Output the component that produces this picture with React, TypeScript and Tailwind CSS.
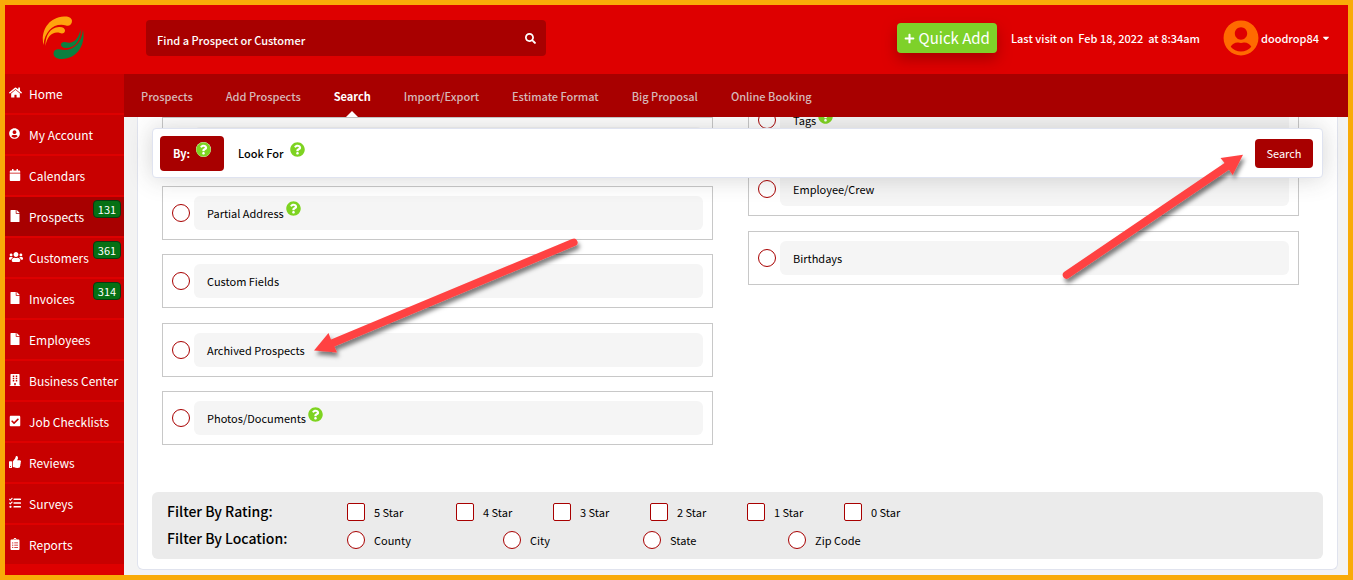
import type { ReactNode } from "react";
import {
  FaBuilding,
  FaCalendar,
  FaCaretDown,
  FaCheckSquare,
  FaClipboardList,
  FaFile,
  FaHome,
  FaPlus,
  FaQuestionCircle,
  FaSearch,
  FaTasks,
  FaThumbsUp,
  FaUserCircle,
  FaUsers,
} from "react-icons/fa";

type MenuItem = { label: string; icon: ReactNode; badge?: string; active?: boolean };

const menu: MenuItem[] = [
  { label: "Home", icon: <FaHome size={13} /> },
  { label: "My Account", icon: <FaUserCircle size={11} /> },
  { label: "Calendars", icon: <FaCalendar size={12} /> },
  { label: "Prospects", icon: <FaFile size={12} />, badge: "131", active: true },
  { label: "Customers", icon: <FaUsers size={14} />, badge: "361" },
  { label: "Invoices", icon: <FaFile size={12} />, badge: "314" },
  { label: "Employees", icon: <FaFile size={12} /> },
  { label: "Business Center", icon: <FaBuilding size={12} /> },
  { label: "Job Checklists", icon: <FaCheckSquare size={12} /> },
  { label: "Reviews", icon: <FaThumbsUp size={12} /> },
  { label: "Surveys", icon: <FaTasks size={12} /> },
  { label: "Reports", icon: <FaClipboardList size={12} /> },
];

const tabs = [
  "Prospects",
  "Add Prospects",
  "Search",
  "Import/Export",
  "Estimate Format",
  "Big Proposal",
  "Online Booking",
];

type OptionItem = { id: string; label?: string; help?: boolean };

const leftOptions: OptionItem[] = [
  { id: "address" },
  { id: "partial-address", label: "Partial Address", help: true },
  { id: "custom-fields", label: "Custom Fields" },
  { id: "archived", label: "Archived Prospects" },
  { id: "photos", label: "Photos/Documents", help: true },
];

const rightOptions: OptionItem[] = [
  { id: "tags", label: "Tags", help: true },
  { id: "employee", label: "Employee/Crew" },
  { id: "birthdays", label: "Birthdays" },
];

const ratings = ["5 Star", "4 Star", "3 Star", "2 Star", "1 Star", "0 Star"];

const locations = [
  { label: "County", width: "w-[156px]" },
  { label: "City", width: "w-[140px]" },
  { label: "State", width: "w-[145px]" },
  { label: "Zip Code", width: "w-[120px]" },
];

function Logo() {
  return (
    <svg width="42" height="44" viewBox="0 0 42 44" role="img" aria-label="Company logo">
      <path
        fill="#ffa40d"
        d="M1.500 29C-1.500 17 5 1.500 22 .5C27 .2 30 2 30 5C30 8.500 27 10.500 24 9.500C13 6.500 3 14 1.500 29Z"
      />
      <path
        fill="#ffa40d"
        d="M3.500 30C3 20 8 11.500 17 11C21 10.800 23 12.500 23 14.500C23 17 20.500 18 18 17C11 15 5 20 3.500 30Z"
      />
      <path
        fill="#0b8040"
        d="M41 14C43.500 27 37 42 20 43C15 43.200 11.500 41 11.500 37.500C11.500 34 15 32.500 18 33.500C29 36 39.500 29 41 14Z"
      />
      <path
        fill="#0b8040"
        d="M38.500 13C39.500 23 34 31.500 25 32C21 32.300 19 31 19 28.800C19 26.500 21.500 25.500 24 26.300C31 28.500 37 23 38.500 13Z"
      />
    </svg>
  );
}

function Help() {
  return (
    <button type="button" aria-label="Help" className="mb-2 shrink-0 text-[#7ed321]">
      <span className="block rounded-full bg-white">
        <FaQuestionCircle size={15} />
      </span>
    </button>
  );
}

const ring = "shrink-0 appearance-none border border-[#a80000] bg-white checked:bg-[#a80000]";

function Option({ id, label, help }: OptionItem) {
  return (
    <div className="flex h-[54px] items-center gap-1 border border-[#c8c8c8] px-[9px]">
      <input
        type="radio"
        name="search-by"
        id={id}
        aria-label={label ? undefined : id}
        className={`${ring} size-[18px] rounded-full`}
      />
      <div className="flex h-[34px] flex-1 items-center gap-0.5 rounded-md bg-[#f5f5f5] pl-[13px]">
        {label && <label htmlFor={id}>{label}</label>}
        {help && <Help />}
      </div>
    </div>
  );
}

function Arrows() {
  return (
    <svg
      className="pointer-events-none absolute top-[135px] left-[295px] z-20"
      width="960"
      height="230"
      viewBox="300 140 960 230"
      aria-hidden="true"
    >
      <defs>
        <filter id="arrow-shadow" x="-10%" y="-10%" width="120%" height="130%">
          <feDropShadow dx="2" dy="4" stdDeviation="2" floodColor="#000" floodOpacity="0.5" />
        </filter>
      </defs>
      <g fill="#ff4343" filter="url(#arrow-shadow)">
        <path d="M314 350.500L328.500 333L331 339.500L572 239A3.700 3.700 0 0 1 575.500 245.800L334.500 346.500L337 352.500Z" />
        <path d="M1243 154.700L1220.500 158L1224.500 163L1064 272A3.900 3.900 0 0 0 1068.500 278.300L1229 169.800L1232.700 175Z" />
      </g>
    </svg>
  );
}

export default function App() {
  return (
    <div className="relative flex min-h-screen flex-col border-5 border-[#f9ab08] bg-[#f3f3f3] font-['Noto_Sans_CJK_SC','Source_Sans_Pro',sans-serif] text-[11px] leading-4 text-black">
      <header className="flex h-[69px] items-center bg-[#de0000] pb-[3px] text-white">
        <a
          href="#home"
          className="flex w-[119px] shrink-0 justify-center pr-1"
          aria-label="Dashboard"
        >
          <Logo />
        </a>
        <form className="ml-[22px] flex h-9 w-[400px] items-center rounded bg-[#a80000] pr-[10px] pl-[11px]">
          <input
            type="text"
            aria-label="Find a Prospect or Customer"
            placeholder="Find a Prospect or Customer"
            className="min-w-0 flex-1 bg-transparent pt-1 font-medium outline-none placeholder:text-white"
          />
          <button type="button" aria-label="Find">
            <FaSearch size={11} />
          </button>
        </form>
        <button
          type="button"
          className="ml-auto flex h-[30px] items-center gap-1 rounded bg-[#7ed12a] px-[7px] text-[15px] shadow-[0_6px_14px_rgba(120,0,0,0.55)]"
        >
          <FaPlus size={11} />
          Quick Add
        </button>
        <p className="ml-[14px] font-medium whitespace-pre">Last visit on  Feb 18, 2022  at 8:34am</p>
        <button
          type="button"
          className="mr-[17px] ml-[23px] flex items-center gap-0.5 font-medium"
        >
          <FaUserCircle size={36} className="text-[#ff6a00]" />
          doodrop84
          <FaCaretDown size={10} />
        </button>
      </header>

      <div className="flex flex-1">
        <nav aria-label="Main menu" className="w-[119px] shrink-0 bg-[#de0000] text-white">
          <ul>
            {menu.map((item) => (
              <li
                key={item.label}
                className={`relative h-[41px] border-b-2 border-[#de0000] ${
                  item.active ? "bg-[#a80000]" : "bg-[#c80000]"
                }`}
              >
                <a href="#menu" className="flex h-full items-center pl-1 text-xs">
                  <span className="w-5 shrink-0 pb-0.5">{item.icon}</span>
                  <span className="whitespace-nowrap">{item.label}</span>
                </a>
                {item.badge && (
                  <span className="absolute top-[3px] right-[3px] flex h-[18px] w-7 items-center justify-center rounded-sm border border-[#0c3a10] bg-[#067014]">
                    {item.badge}
                  </span>
                )}
              </li>
            ))}
          </ul>
        </nav>

        <div className="flex min-w-0 flex-1 flex-col">
          <nav aria-label="Prospects" className="h-[43px] bg-[#a80000] pl-[17px] text-[#d6b8b8]">
            <ul className="flex h-full gap-[33px] font-medium">
              {tabs.map((tab) => (
                <li key={tab} className="relative flex items-center">
                  {tab === "Search" ? (
                    <>
                      <a href="#tab" aria-current="page" className="font-bold text-white">
                        {tab}
                      </a>
                      <span className="absolute bottom-0 left-1/2 size-0 -translate-x-1/2 border-x-6 border-b-6 border-x-transparent border-b-white" />
                    </>
                  ) : (
                    <a href="#tab">{tab}</a>
                  )}
                </li>
              ))}
            </ul>
          </nav>

          <main className="relative flex-1 overflow-hidden pr-[10px] pb-[5px] pl-[13px]">
            <div className="absolute top-[11px] right-[25px] left-7 z-10 flex h-[50px] items-center rounded border border-[#dfe3f0] bg-white pr-[9px] pl-[7px] shadow-[0_0_24px_rgba(60,60,60,0.22)]">
              <div className="flex h-[35px] w-16 items-center justify-center gap-1.5 rounded bg-[#a80000] font-bold text-white">
                By: <Help />
              </div>
              <div className="ml-[14px] flex items-center gap-1.5 font-medium">
                Look For <Help />
              </div>
              <button
                type="button"
                className="ml-auto h-[29px] w-[58px] rounded bg-[#a80000] text-white"
              >
                Search
              </button>
            </div>

            <div className="rounded-b-md border border-t-0 border-[#e0e3ee] bg-white px-[14px] pb-[10px]">
              <div className="grid grid-cols-2 items-start gap-[35px] pr-6 pl-[10px]">
                <div className="flex h-[328px] flex-col justify-between">
                  {leftOptions.map((o) => (
                    <Option key={o.id} {...o} />
                  ))}
                </div>
                <div className="-mt-6 flex h-[192px] flex-col justify-between">
                  {rightOptions.map((o) => (
                    <Option key={o.id} {...o} />
                  ))}
                </div>
              </div>

              <section className="mt-[47px] rounded-md bg-[#ebebeb] px-[15px] pt-[7px] pb-1.5">
                <fieldset className="flex h-[26px] items-center">
                  <legend className="float-left w-[180px] pb-0.5 text-sm font-medium">
                    Filter By Rating:
                  </legend>
                  {ratings.map((r) => (
                    <label
                      key={r}
                      className="flex w-[97px] items-center gap-[9px] first-of-type:w-[109px]"
                    >
                      <input type="checkbox" className={`${ring} size-[18px] rounded-xs`} />
                      {r}
                    </label>
                  ))}
                </fieldset>
                <fieldset className="mt-0.5 flex h-[26px] items-center">
                  <legend className="float-left w-[180px] pb-1 text-sm font-medium">
                    Filter By Location:
                  </legend>
                  {locations.map((l) => (
                    <label key={l.label} className={`flex items-center gap-[9px] ${l.width}`}>
                      <input
                        type="radio"
                        name="location"
                        className={`${ring} size-[18px] rounded-full`}
                      />
                      {l.label}
                    </label>
                  ))}
                </fieldset>
              </section>
            </div>
          </main>
        </div>
      </div>
      <Arrows />
    </div>
  );
}
